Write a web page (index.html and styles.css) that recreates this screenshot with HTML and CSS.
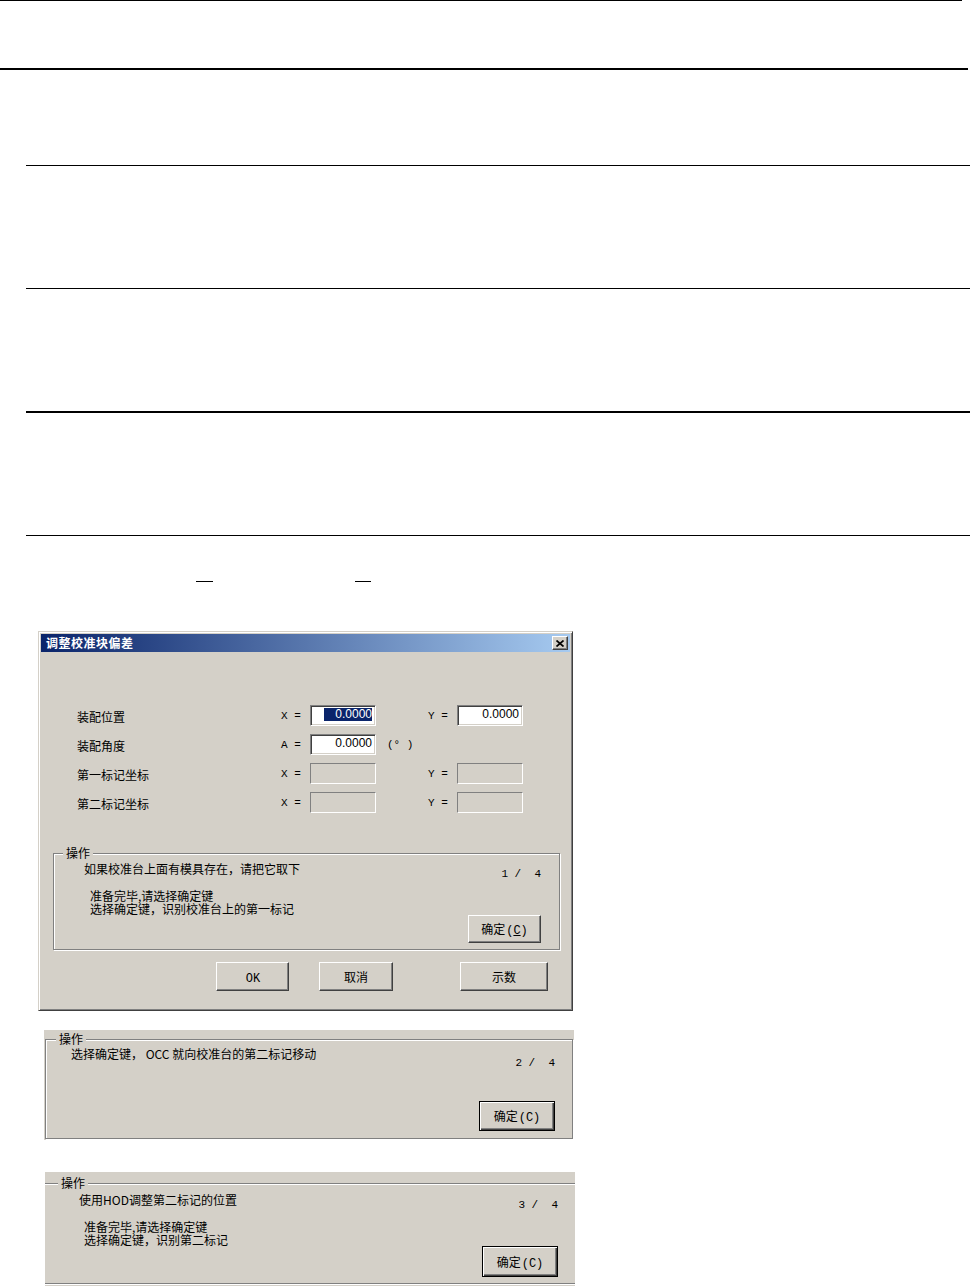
FILE: index.html
```html
<!DOCTYPE html>
<html lang="zh-CN">
<head>
  <meta charset="UTF-8">
  <meta name="viewport" content="width=device-width, initial-scale=1.0">
  <title>调整校准块偏差</title>
  <link rel="stylesheet" href="styles.css">
</head>
<body>
  <div class="rule rule-top"></div>
  <div class="rule rule-head"></div>
  <div class="blocks">
    <div class="block block-first"></div>
    <div class="block"></div>
    <div class="block block-heavy"></div>
    <div class="block"></div>
  </div>
  <div class="marks"><span class="mark"></span><span class="mark mark-second"></span></div>

  <div class="dialog">
    <div class="titlebar">
      <span class="title">调整校准块偏差</span>
      <span class="close">
        <svg width="8" height="7" viewBox="0 0 8 7"><path d="M0.5 0.5L7.5 6.5M7.5 0.5L0.5 6.5" stroke="#000" stroke-width="1.7"/></svg>
      </span>
    </div>
    <div class="dialog-body">
      <div class="fields">
        <span class="label">装配位置</span>
        <span class="eq">X =</span>
        <span class="field"><span class="sel">0.0000</span></span>
        <span></span>
        <span class="eq">Y =</span>
        <span class="field">0.0000</span>

        <span class="label">装配角度</span>
        <span class="eq">A =</span>
        <span class="field">0.0000</span>
        <span class="unit">(°&nbsp;)</span>
        <span></span>
        <span></span>

        <span class="label">第一标记坐标</span>
        <span class="eq">X =</span>
        <span class="field field-off"></span>
        <span></span>
        <span class="eq">Y =</span>
        <span class="field field-off"></span>

        <span class="label">第二标记坐标</span>
        <span class="eq">X =</span>
        <span class="field field-off"></span>
        <span></span>
        <span class="eq">Y =</span>
        <span class="field field-off"></span>
      </div>

      <div class="group group-main">
        <span class="group-title">操作</span>
        <div class="group-head">
          <span>如果校准台上面有模具存在，请把它取下</span>
          <span class="counter">1 /  4</span>
        </div>
        <div class="notes">准备完毕,请选择确定键<br>选择确定键，识别校准台上的第一标记</div>
        <div class="group-foot">
          <button class="btn btn-step">确定<span class="mono">(<u>C</u>)</span></button>
        </div>
      </div>

      <div class="actions">
        <button class="btn btn-ok"><span class="mono">OK</span></button>
        <button class="btn btn-cancel">取消</button>
        <button class="btn btn-show">示数</button>
      </div>
    </div>
  </div>

  <div class="panel panel-two">
    <div class="group group-two">
      <span class="group-title">操作</span>
      <div class="group-head">
        <span>选择确定键， OCC 就向校准台的第二标记移动</span>
        <span class="counter">2 /  4</span>
      </div>
      <div class="group-foot">
        <button class="btn btn-default">确定<span class="mono">(C)</span></button>
      </div>
    </div>
  </div>

  <div class="panel panel-three">
    <div class="group group-three">
      <span class="group-title">操作</span>
      <div class="group-head">
        <span>使用HOD调整第二标记的位置</span>
        <span class="counter">3 /  4</span>
      </div>
      <div class="notes">准备完毕,请选择确定键<br>选择确定键，识别第二标记</div>
      <div class="group-foot">
        <button class="btn btn-default btn-tall">确定<span class="mono">(C)</span></button>
      </div>
    </div>
  </div>
</body>
</html>
```

FILE: styles.css
```css
body {
  margin: 0;
  height: 1286px;
  overflow: hidden;
  background-color: #fff;
  color: #000;
  font-family: "Noto Sans CJK SC", sans-serif;
  font-size: 12px;
}

/* document rules above the screenshots */
.rule-top {
  width: 962px;
  border-top: 1px solid #000;
}
.rule-head {
  width: 968px;
  margin-top: 67px;
  border-top: 2px solid #000;
}
.blocks {
  margin-left: 26px;
}
.block {
  height: 122px;
  border-bottom: 1px solid #000;
}
.block-first {
  height: 95px;
}
.block-heavy {
  border-bottom-width: 2px;
}
.marks {
  display: flex;
  margin-top: 45px;
  padding-left: 196px;
}
.mark {
  width: 17px;
  border-top: 1px solid #000;
}
.mark-second {
  width: 16px;
  margin-left: 142px;
}

.mono {
  font-family: "Liberation Mono", monospace;
  font-size: 12px;
}

/* dialog window */
.dialog {
  width: 535px;
  height: 380px;
  box-sizing: border-box;
  margin: 49px 0 0 38px;
  padding: 2px;
  background-color: #d4d0c8;
  border: 1px solid;
  border-color: #d4d0c8 #404040 #404040 #d4d0c8;
  box-shadow: inset 1px 1px 0 #fff, inset -1px -1px 0 #808080;
}
.titlebar {
  height: 18px;
  display: flex;
  align-items: center;
  justify-content: space-between;
  padding: 0 2px 0 5px;
  background: linear-gradient(to right, #0a246a, #a6caf0);
}
.title {
  color: #fff;
  font-weight: bold;
  letter-spacing: 0.5px;
  line-height: 18px;
}
.close {
  width: 16px;
  height: 14px;
  box-sizing: border-box;
  display: flex;
  align-items: center;
  justify-content: center;
  background-color: #d4d0c8;
  border: 1px solid;
  border-color: #fff #404040 #404040 #fff;
  box-shadow: inset -1px -1px 0 #808080;
}
.dialog-body {
  padding: 53px 10px 0 12px;
}

.fields {
  display: grid;
  grid-template-columns: 204px 29px 66px 52px 29px 66px;
  grid-auto-rows: 21px;
  row-gap: 8px;
  align-items: center;
  margin-left: 24px;
  line-height: 14px;
}
.label {
  padding-top: 3px;
}
.eq,
.unit {
  font-family: "Liberation Mono", monospace;
  font-size: 11px;
}
.unit {
  padding-left: 11px;
}
.field {
  height: 21px;
  box-sizing: border-box;
  padding-right: 3px;
  background-color: #fff;
  border: 1px solid;
  border-color: #808080 #fff #fff #808080;
  box-shadow: inset 1px 1px 0 #404040, inset -1px -1px 0 #d4d0c8;
  text-align: right;
  font-family: "Liberation Sans", sans-serif;
  font-size: 12px;
  line-height: 17px;
}
.field-off {
  background-color: #d4d0c8;
  box-shadow: none;
}
.sel {
  display: inline-block;
  padding-left: 11px;
  background-color: #0a246a;
  color: #fff;
  line-height: 13px;
}

/* group boxes */
.group {
  position: relative;
  display: flex;
  flex-direction: column;
  box-sizing: border-box;
  border: 1px solid #808080;
  box-shadow: inset 1px 1px 0 #fff, 1px 1px 0 #fff;
  line-height: 14px;
}
.group-title {
  position: absolute;
  top: -8px;
  padding: 0 3px;
  background-color: #d4d0c8;
}
.group-head {
  display: flex;
  justify-content: space-between;
  align-items: flex-start;
}
.counter {
  margin-top: 5px;
  white-space: pre;
  font-family: "Liberation Mono", monospace;
  font-size: 11px;
}
.notes {
  margin: 8px 0 0 6px;
  line-height: 13px;
}
.group-foot {
  display: flex;
  justify-content: flex-end;
  margin-top: auto;
}

.group-main {
  height: 97px;
  margin-top: 40px;
  padding: 8px 18px 9px 30px;
}
.group-main .group-title {
  left: 9px;
}

/* buttons */
.btn {
  padding: 0;
  background-color: #d4d0c8;
  color: #000;
  font-family: "Noto Sans CJK SC", sans-serif;
  font-size: 12px;
  border: 1px solid;
  border-color: #fff #404040 #404040 #fff;
  box-shadow: inset -1px -1px 0 #808080;
}
.btn .mono {
  margin-left: 1px;
}
.btn-step {
  width: 73px;
  height: 28px;
}
.actions {
  display: flex;
  margin-top: 12px;
  padding-left: 163px;
}
.btn-ok {
  width: 73px;
  height: 29px;
}
.btn-cancel {
  width: 74px;
  height: 29px;
  margin-left: 30px;
}
.btn-show {
  width: 88px;
  height: 29px;
  margin-left: 67px;
}
.btn-default {
  width: 76px;
  height: 30px;
  border: 1px solid #000;
  box-shadow: inset 1px 1px 0 #fff, inset -1px -1px 0 #404040, inset -2px -2px 0 #808080;
}
.btn-tall {
  height: 31px;
}

/* the two later steps */
.panel {
  width: 530px;
  box-sizing: border-box;
  background-color: #d4d0c8;
}
.panel-two {
  height: 110px;
  margin: 19px 0 0 44px;
  padding: 9px 1px 0 1px;
}
.group-two {
  height: 100px;
  padding: 7px 17px 7px 25px;
}
.group-two .group-title {
  left: 10px;
}
.group-two .counter {
  margin-top: 9px;
}
.panel-three {
  height: 114px;
  margin: 32px 0 0 45px;
  padding-top: 11px;
}
.group-three {
  height: 101px;
  padding: 9px 17px 7px 34px;
  border-left: none;
  border-right: none;
  box-shadow: inset 0 1px 0 #fff, 0 1px 0 #fff;
}
.group-three .group-title {
  left: 13px;
}
.group-three .notes {
  margin-left: 5px;
}
```
